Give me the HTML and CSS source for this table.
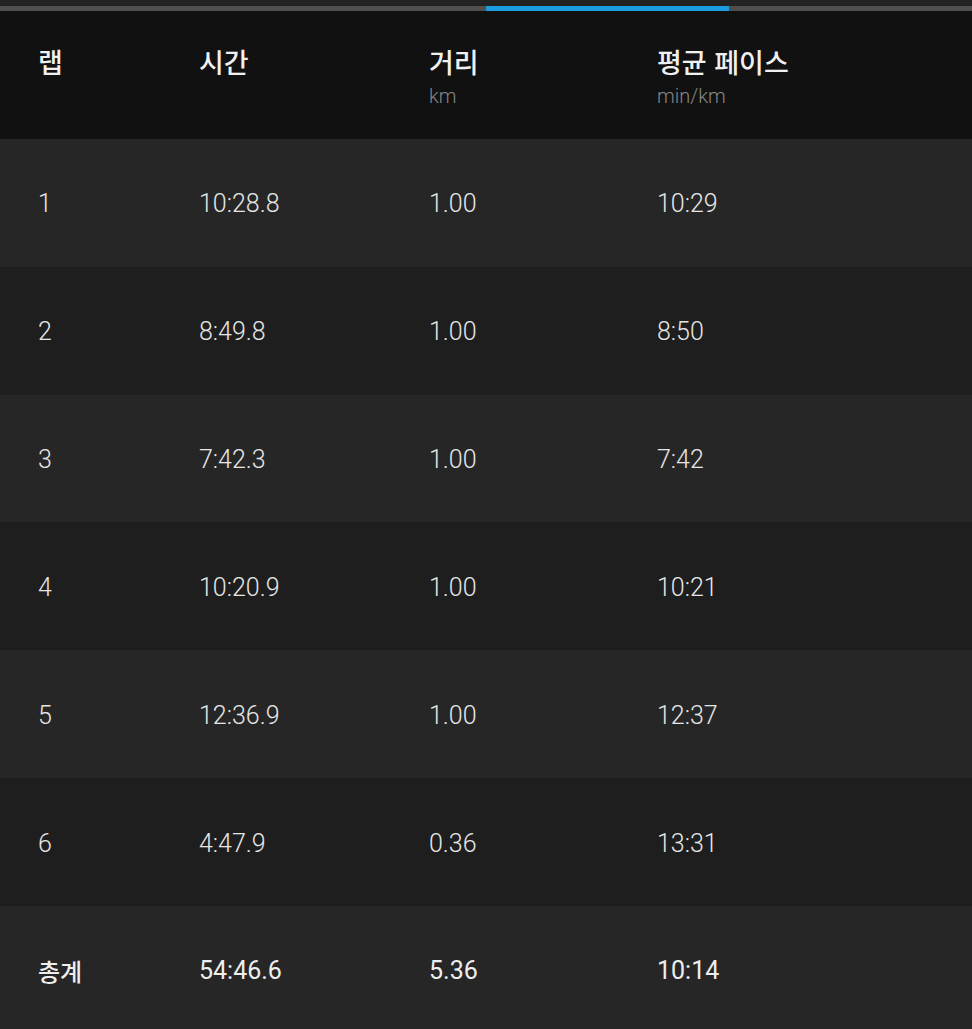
FILE: index.html
```html
<!DOCTYPE html>
<html lang="ko">
<head>
<meta charset="utf-8">
<link rel="stylesheet" href="styles.css">
</head>
<body>
<div class="topstrip"></div>
<div class="tabbar"><div class="tab-indicator"></div></div>
<div class="table">
  <div class="row head">
    <div class="cell"><div class="title">랩</div></div>
    <div class="cell"><div class="title">시간</div></div>
    <div class="cell"><div class="title">거리</div><div class="unit">km</div></div>
    <div class="cell"><div class="title">평균 페이스</div><div class="unit">min/km</div></div>
  </div>
  <div class="row odd"><div class="cell">1</div><div class="cell">10:28.8</div><div class="cell">1.00</div><div class="cell">10:29</div></div>
  <div class="row even"><div class="cell">2</div><div class="cell">8:49.8</div><div class="cell">1.00</div><div class="cell">8:50</div></div>
  <div class="row odd"><div class="cell">3</div><div class="cell">7:42.3</div><div class="cell">1.00</div><div class="cell">7:42</div></div>
  <div class="row even"><div class="cell">4</div><div class="cell">10:20.9</div><div class="cell">1.00</div><div class="cell">10:21</div></div>
  <div class="row odd"><div class="cell">5</div><div class="cell">12:36.9</div><div class="cell">1.00</div><div class="cell">12:37</div></div>
  <div class="row even"><div class="cell">6</div><div class="cell">4:47.9</div><div class="cell">0.36</div><div class="cell">13:31</div></div>
  <div class="row odd total"><div class="cell ko">총계</div><div class="cell">54:46.6</div><div class="cell">5.36</div><div class="cell">10:14</div></div>
</div>
</body>
</html>
```
FILE: styles.css
```css
html, body {
  margin: 0;
  padding: 0;
  background: #262626;
  overflow: hidden;
}
body {
  width: 972px;
  height: 1029px;
  font-family: Roboto, "Noto Sans CJK KR", sans-serif;
  color: #e6e6e6;
}
.topstrip {
  height: 6px;
  background: #222222;
}
.tabbar {
  height: 5px;
  background: #4f4f4f;
  padding-left: 486px;
}
.tab-indicator {
  width: 243px;
  height: 5px;
  background: #1b9ee0;
}
.table {
  display: flex;
  flex-direction: column;
}
.row {
  display: grid;
  grid-template-columns: 161px 230px 228px 1fr;
  padding-left: 38px;
  padding-top: 3px;
  height: 127.83px;
  align-items: center;
  font-size: 25px;
  font-weight: 300;
  box-sizing: border-box;
}
.row.head {
  height: 128px;
  background: #111111;
  align-items: start;
  padding-top: 34px;
}
.odd { background: #262626; }
.even { background: #1e1e1e; }
.cell {
  line-height: 28px;
  white-space: nowrap;
}
.title {
  font-family: "Noto Sans CJK KR", sans-serif;
  font-weight: 500;
  font-size: 27px;
  line-height: 34px;
  color: #f0f0f0;
}
.unit {
  font-size: 20px;
  font-weight: 300;
  color: #868686;
  line-height: 24px;
  margin-top: 5px;
}
.total {
  font-weight: 400;
  color: #eeeeee;
}
.ko {
  font-family: "Noto Sans CJK KR", sans-serif;
  font-weight: 500;
  font-size: 24px;
}
```
